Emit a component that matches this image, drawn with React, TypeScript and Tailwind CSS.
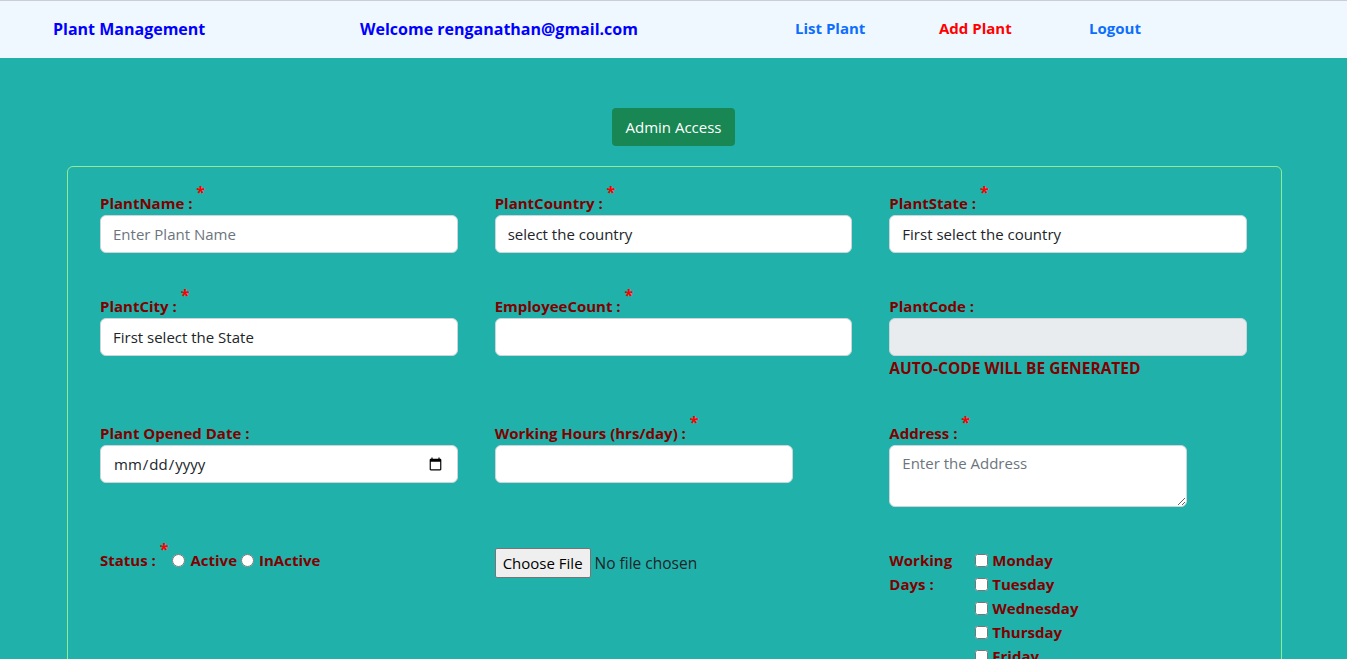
import React from "react";

const font = { fontFamily: "'Open Sans', 'Noto Sans', sans-serif" };

function Star() {
  return (
    <span className="relative -top-[11px] text-[16px] leading-none text-[#ff0000]">*</span>
  );
}

function Label({ text, req }: { text: string; req?: boolean }) {
  return (
    <div className="h-6 text-[15px] leading-6 font-bold text-[#800000] whitespace-nowrap">
      {text}
      {req ? (
        <>
          {" "}
          <Star />
        </>
      ) : null}
    </div>
  );
}

const inputCls =
  "block h-[38px] w-full rounded-[6px] border border-[#ced4da] bg-white px-[12px] text-[15px] text-[#212529] placeholder:text-[#6c757d] outline-none";

export default function App() {
  const days = ["Monday", "Tuesday", "Wednesday", "Thursday", "Friday", "Saturday", "Sunday"];
  return (
    <div className="min-h-screen bg-[#20b2aa]" style={font}>
      <nav className="flex h-[58px] items-center border-t border-[#cbcfd3] bg-[#f0f8ff] pb-[2px] text-[16px] font-bold">
        <div className="ml-[53px] w-[307px] text-[#0000ff]">Plant Management</div>
        <div className="w-[435px] text-[#0000ff]">Welcome renganathan@gmail.com</div>
        <div className="w-[144px] text-[15px] text-[#0d6efd]">List Plant</div>
        <div className="w-[150px] text-[15px] text-[#ff0000]">Add Plant</div>
        <div className="text-[15px] text-[#0d6efd]">Logout</div>
      </nav>

      <div className="flex justify-center pt-[50px]">
        <button className="h-[38px] w-[123px] rounded-[4px] bg-[#198754] text-[15px] text-white">
          Admin Access
        </button>
      </div>

      <div className="ml-[67px] mr-[65px] mt-[20px] rounded-[6px] border border-[#90ee90] pl-[32px] pr-[34px] pt-[24px] pb-[40px]">
        <div className="grid grid-cols-3 gap-x-[37px] gap-y-[41px]">
          <div>
            <Label text="PlantName :" req />
            <input className={inputCls} placeholder="Enter Plant Name" />
          </div>
          <div>
            <Label text="PlantCountry :" req />
            <input className={inputCls} defaultValue="select the country" />
          </div>
          <div>
            <Label text="PlantState :" req />
            <input className={inputCls} defaultValue="First select the country" />
          </div>

          <div>
            <Label text="PlantCity :" req />
            <input className={inputCls} defaultValue="First select the State" />
          </div>
          <div>
            <Label text="EmployeeCount :" req />
            <input className={inputCls} />
          </div>
          <div>
            <Label text="PlantCode :" />
            <input className={inputCls + " !bg-[#e9ecef]"} disabled />
            <div className="h-6 text-[15.5px] leading-6 font-bold text-[#800000]">AUTO-CODE WILL BE GENERATED</div>
          </div>

          <div>
            <Label text="Plant Opened Date :" />
            <input type="date" className={inputCls} />
          </div>
          <div>
            <Label text="Working Hours (hrs/day) :" req />
            <input className={inputCls + " !w-[298px]"} />
          </div>
          <div>
            <Label text="Address :" req />
            <textarea
              className="block h-[62px] w-[298px] rounded-[6px] border border-[#ced4da] bg-white px-[12px] py-[6px] text-[15px] text-[#212529] placeholder:text-[#6c757d] outline-none"
              placeholder="Enter the Address"
            />
          </div>

          <div className="text-[15px] leading-6 font-bold text-[#800000]">
            Status : <Star />
            <label>
              <input type="radio" name="status" className="mr-[5px] ml-[4px] align-[-1px]" />
              Active
            </label>
            <label>
              <input type="radio" name="status" className="mr-[5px] ml-[4px] align-[-1px]" />
              InActive
            </label>
          </div>
          <div>
            <input type="file" className="text-[15.5px] text-[#212529] file:mr-[4px] file:h-[30px] file:rounded-[2px] file:border file:border-[#767676] file:bg-[#efefef] file:px-[7px] file:text-[15px] file:text-black" />
          </div>
          <div className="flex text-[15px] leading-6 font-bold text-[#800000]">
            <div className="w-[82px]">Working Days :</div>
            <div className="flex flex-col">
              {days.map((d) => (
                <label key={d} className="flex items-center">
                  <input type="checkbox" className="mr-[4px] ml-[4px] h-[13px] w-[13px]" />
                  {d}
                </label>
              ))}
            </div>
          </div>
        </div>
      </div>
    </div>
  );
}
